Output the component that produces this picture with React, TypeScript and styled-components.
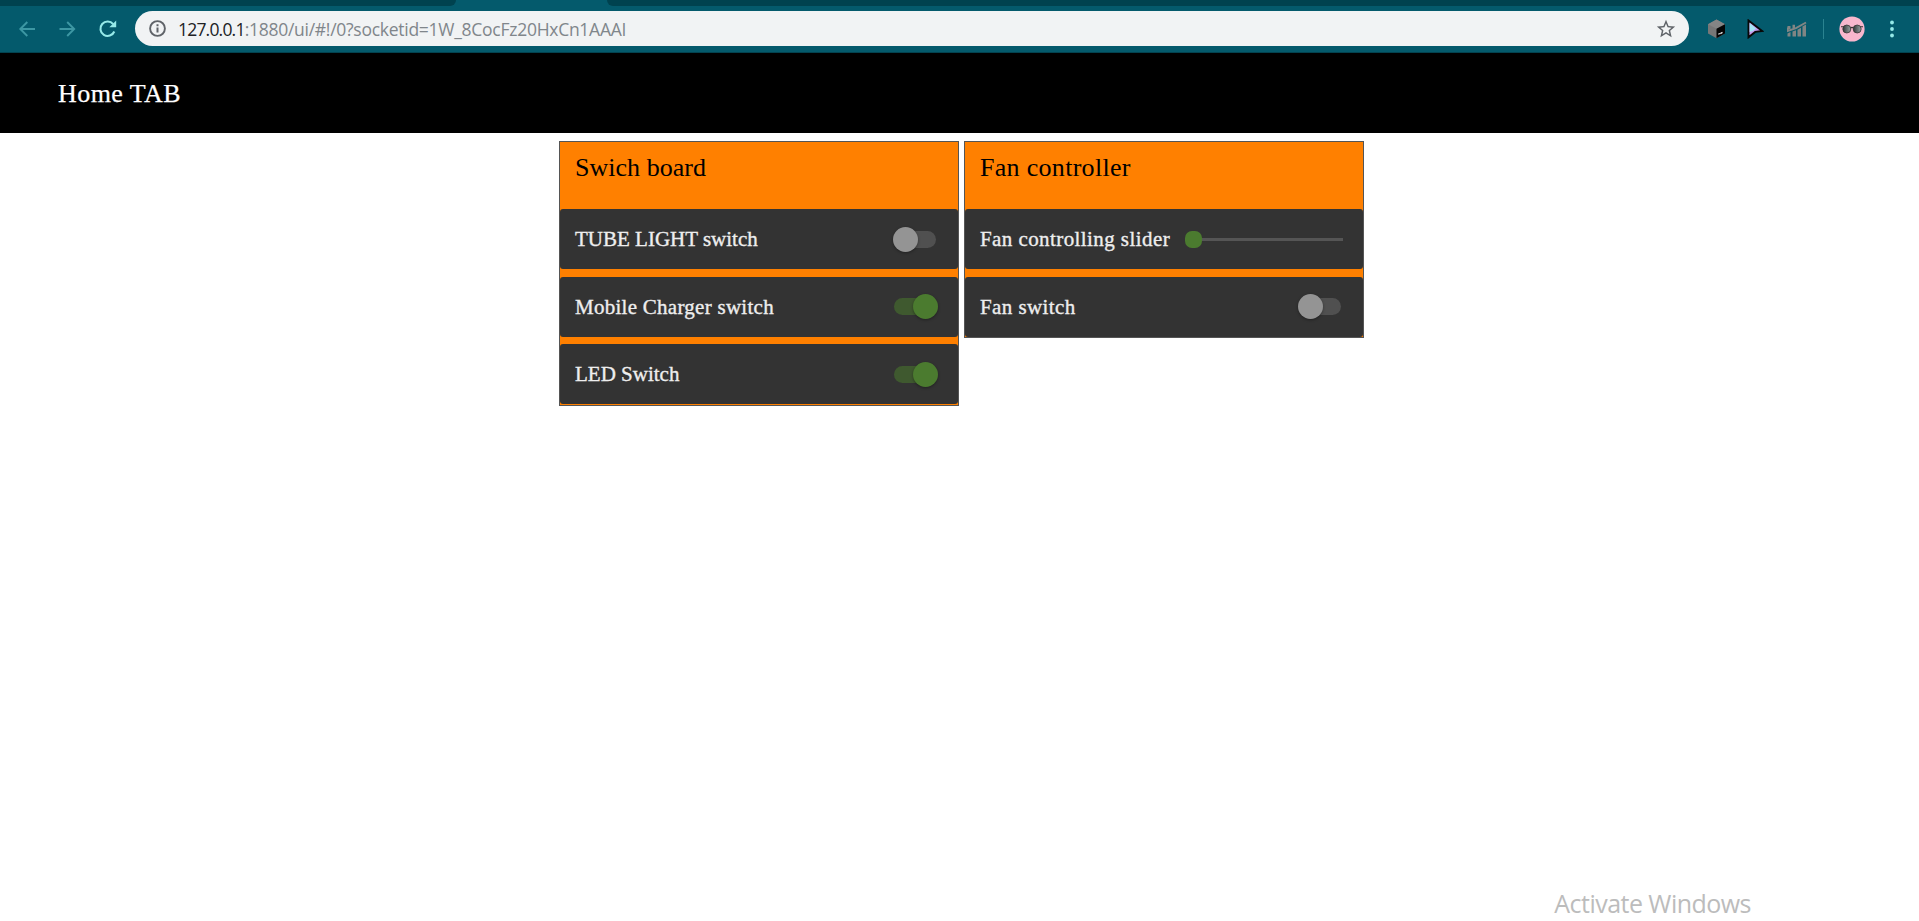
import React from "react";
import styled, { createGlobalStyle } from "styled-components";

const Global = createGlobalStyle`
  * { box-sizing: border-box; }
  html, body { margin: 0; background: #fff; }
  body { overflow: hidden; }
`;

const Page = styled.div`
  display: flex;
  flex-direction: column;
  height: 921px;
  width: 1919px;
  font-family: Georgia, "Liberation Serif", serif;
`;

const TabStrip = styled.div`
  display: flex;
  justify-content: space-between;
  height: 6px;
  background: #045a6c;
`;
const InactiveTabs = styled.div<{ $width: number; $side: "left" | "right" }>`
  width: ${(p) => p.$width}px;
  background: #00424f;
  border-radius: ${(p) => (p.$side === "left" ? "0 0 6px 0" : "0 0 0 6px")};
`;

const Toolbar = styled.div`
  display: flex;
  align-items: center;
  height: 47px;
  padding: 0 0 1px 17px;
  background: #045a6c;
  border-bottom: 1px solid #034350;
`;
const NavIcon = styled.svg<{ $color: string; $gap: number }>`
  width: 20px;
  height: 20px;
  margin-right: ${(p) => p.$gap}px;
  color: ${(p) => p.$color};
  flex: none;
`;
const AddressBar = styled.div`
  display: flex;
  align-items: center;
  width: 1554px;
  height: 35px;
  padding: 0 12px 0 14px;
  border-radius: 18px;
  background: #f1f3f4;
  font-family: "Segoe UI", "Open Sans", sans-serif;
  font-size: 17.5px;
  color: #80868b;
`;
const Host = styled.span`
  margin-left: 12px;
  color: #202124;
  letter-spacing: -0.8px;
`;
const UrlPath = styled.span`
  flex: 1;
  letter-spacing: -0.27px;
`;
const Extensions = styled.div`
  display: flex;
  align-items: center;
  margin-left: 18px;
`;
const Glyph = styled.svg<{ $w: number; $h: number; $gap?: number }>`
  width: ${(p) => p.$w}px;
  height: ${(p) => p.$h}px;
  margin-right: ${(p) => p.$gap ?? 0}px;
  flex: none;
`;
const Separator = styled.div`
  width: 1px;
  height: 20px;
  margin-right: 15px;
  background: #2b8390;
`;

const Header = styled.header`
  display: flex;
  align-items: center;
  height: 80px;
  padding: 2px 0 0 58px;
  background: #000;
  color: #fff;
  font-size: 26px;
  letter-spacing: 0.45px;
  -webkit-text-stroke: 0.25px currentColor;
`;

const Board = styled.main`
  display: flex;
  align-items: flex-start;
  flex: 1;
  gap: 5px;
  padding: 8px 0 0 559px;
`;
const Panel = styled.section<{ $bottom: number }>`
  width: 400px;
  padding-bottom: ${(p) => p.$bottom}px;
  background: #ff8000;
  border: 1px solid #555;
`;
const PanelTitle = styled.h2<{ $spacing: number }>`
  height: 67px;
  margin: 0;
  padding: 11px 15px 0;
  font-size: 26px;
  font-weight: 400;
  line-height: 30px;
  letter-spacing: ${(p) => p.$spacing}px;
  color: #000;
`;
const Row = styled.div<{ $gap?: number }>`
  display: flex;
  align-items: center;
  height: 60px;
  margin-top: ${(p) => p.$gap ?? 0}px;
  padding: 0 22px 0 15px;
  border-radius: 3px;
  background: #333;
`;
const Label = styled.span<{ $spacing: number }>`
  flex: 1;
  font-size: 21px;
  line-height: 24px;
  letter-spacing: ${(p) => p.$spacing}px;
  color: #eee;
  white-space: nowrap;
  -webkit-text-stroke: 0.35px currentColor;
`;
const Track = styled.div<{ $on: boolean; $lift: number }>`
  display: flex;
  align-items: center;
  justify-content: ${(p) => (p.$on ? "flex-end" : "flex-start")};
  width: 42px;
  height: 17px;
  margin-bottom: ${(p) => p.$lift}px;
  border-radius: 9px;
  background: ${(p) => (p.$on ? "#3f592f" : "#505050")};
`;
const Thumb = styled.div<{ $on: boolean }>`
  flex: none;
  width: 25px;
  height: 25px;
  margin: 0 ${(p) => (p.$on ? "-2px" : "0")} 0 ${(p) => (p.$on ? "0" : "-1px")};
  border-radius: 50%;
  background: ${(p) => (p.$on ? "#4b7b2f" : "#949494")};
  box-shadow: 0 1px 3px rgba(0, 0, 0, 0.35);
`;
const Slider = styled.div`
  display: flex;
  align-items: center;
  width: 158px;
  margin-right: -2px;
`;
const SliderThumb = styled.div`
  width: 17px;
  height: 17px;
  border-radius: 7px;
  background: #4b7b2f;
`;
const SliderLine = styled.div`
  flex: 1;
  height: 3px;
  background: #555;
`;
const Footer = styled.footer`
  display: flex;
  justify-content: flex-end;
  height: 35px;
  padding-right: 168px;
  font-family: "Segoe UI", "Open Sans", sans-serif;
  font-size: 25px;
  line-height: 34px;
  letter-spacing: -0.53px;
  color: #bcbcbc;
`;

type SwitchRowProps = { label: string; on?: boolean; gap?: number; spacing?: number; lift?: number };
const SwitchRow = ({ label, on = false, gap, spacing = 0, lift = 0 }: SwitchRowProps) => (
  <Row $gap={gap}>
    <Label $spacing={spacing}>{label}</Label>
    <Track $on={on} $lift={lift}>
      <Thumb $on={on} />
    </Track>
  </Row>
);

const BrowserBar = () => (
  <>
    <TabStrip>
      <InactiveTabs $width={456} $side="left" />
      <InactiveTabs $width={1312} $side="right" />
    </TabStrip>
    <Toolbar>
      <NavIcon $color="#3d97a3" $gap={20} viewBox="0 0 20 20" fill="none" stroke="currentColor" strokeWidth="1.9">
        <path d="M18 10H3.5M10.3 3L3.3 10l7 7" />
      </NavIcon>
      <NavIcon $color="#3d97a3" $gap={21} viewBox="0 0 20 20" fill="none" stroke="currentColor" strokeWidth="1.9">
        <path d="M2.500 10H17M10.200 3l7 7-7 7" />
      </NavIcon>
      <NavIcon $color="#96e9e8" $gap={17} viewBox="0 0 20 20">
        <path d="M16.300 12.500A7.200 7.200 0 1 1 15.200 5.200" fill="none" stroke="currentColor" strokeWidth="2.1" />
        <path d="M18.200 1.600V8.300H11.300Z" fill="currentColor" />
      </NavIcon>
      <AddressBar>
        <Glyph $w={17} $h={17} viewBox="0 0 17 17">
          <circle cx="8.500" cy="8.500" r="7.400" fill="none" stroke="#5f6368" strokeWidth="1.900" />
          <path d="M7.500 7.500h2v5h-2zM7.500 4.200h2v2h-2z" fill="#5f6368" />
        </Glyph>
        <Host>127.0.0.1</Host>
        <UrlPath>:1880/ui/#!/0?socketid=1W_8CocFz20HxCn1AAAI</UrlPath>
        <Glyph $w={22} $h={22} viewBox="0 0 24 24">
          <path d="M22 9.240l-7.190-.620L12 2 9.190 8.630 2 9.240l5.460 4.730L5.820 21 12 17.270 18.180 21l-1.630-7.030L22 9.240zM12 15.400l-3.760 2.270 1-4.280-3.320-2.880 4.380-.380L12 6.100l1.710 4.040 4.380.380-3.320 2.880 1 4.280L12 15.400z" fill="#5f6368" />
        </Glyph>
      </AddressBar>
      <Extensions>
        <Glyph $w={19} $h={20} $gap={21} viewBox="0 0 19 20">
          <path d="M9.500 0.500L18 5.300V14.500L9.500 19.300L1 14.500V5.300Z" fill="#777" />
          <path d="M9.500 0.500L18 5.300L9.500 9.800L1 5.300Z" fill="#858585" />
          <path d="M9.500 9.800L18 5.300V14.500L9.500 19.300Z" fill="#050505" />
          <path d="M11.300 15.300l1.600-.9M13.300 14.600l2.200-1.200" stroke="#eee" strokeWidth="1.200" fill="none" />
        </Glyph>
        <Glyph $w={17} $h={20} $gap={23} viewBox="0 0 17 20">
          <path d="M1.500 1.500L15.200 12L8.200 12.900L1.500 18.300Z" fill="#c49af0" stroke="#080808" strokeWidth="1.900" />
          <path d="M2.600 4L9 9.500L6 12L2.600 13Z" fill="#a5e6f5" />
        </Glyph>
        <Glyph $w={20} $h={16} $gap={16} viewBox="0 0 20 16">
          <path d="M0.500 12.500l3-1.500v4.500h-3zM5.500 10.500l3.500-1.200v6.200H5.500zM10.500 8.700l3.500-2v8.800h-3.500zM15.500 5.500l3.500-2v12h-3.500z" fill="#808584" />
          <path d="M0.700 6.500V10L9 7.200L19 1.500" fill="none" stroke="#808584" strokeWidth="2" />
          <path d="M0.500 5h3v3h-3zM5.500 3.700H8v4H5.500z" fill="#808584" />
        </Glyph>
        <Separator />
        <Glyph $w={26} $h={26} $gap={25} viewBox="0 0 26 26">
          <defs>
            <linearGradient id="lens" x1="0" x2="1">
              <stop offset="0" stopColor="#303637" />
              <stop offset="1" stopColor="#9aa3a3" />
            </linearGradient>
          </defs>
          <circle cx="13" cy="13" r="12.600" fill="#f8b7cd" />
          <circle cx="7.800" cy="13" r="4" fill="url(#lens)" stroke="#383434" strokeWidth="0.800" />
          <circle cx="18.200" cy="13" r="4" fill="url(#lens)" stroke="#383434" strokeWidth="0.800" />
          <path d="M2 10.800h2.500M21.500 10.800H24M11.500 12q1.500-1.300 3 0" fill="none" stroke="#383434" strokeWidth="1.100" />
        </Glyph>
        <Glyph $w={4} $h={18} viewBox="0 0 4 18">
          <circle cx="2" cy="2.500" r="1.900" fill="#96e9e8" />
          <circle cx="2" cy="9" r="1.900" fill="#96e9e8" />
          <circle cx="2" cy="15.500" r="1.900" fill="#96e9e8" />
        </Glyph>
      </Extensions>
    </Toolbar>
  </>
);

export default function App() {
  return (
    <Page>
      <Global />
      <BrowserBar />
      <Header>Home TAB</Header>
      <Board>
        <Panel $bottom={1}>
          <PanelTitle $spacing={0.03}>Swich board</PanelTitle>
          <SwitchRow label="TUBE LIGHT switch" />
          <SwitchRow label="Mobile Charger switch" gap={8} on spacing={0.27} lift={1} />
          <SwitchRow label="LED Switch" gap={7} on spacing={0} />
        </Panel>
        <Panel $bottom={0}>
          <PanelTitle $spacing={0.3}>Fan controller</PanelTitle>
          <Row>
            <Label $spacing={0.42}>Fan controlling slider</Label>
            <Slider>
              <SliderThumb />
              <SliderLine />
            </Slider>
          </Row>
          <SwitchRow label="Fan switch" gap={8} spacing={0.42} lift={1} />
        </Panel>
      </Board>
      <Footer>Activate Windows</Footer>
    </Page>
  );
}
